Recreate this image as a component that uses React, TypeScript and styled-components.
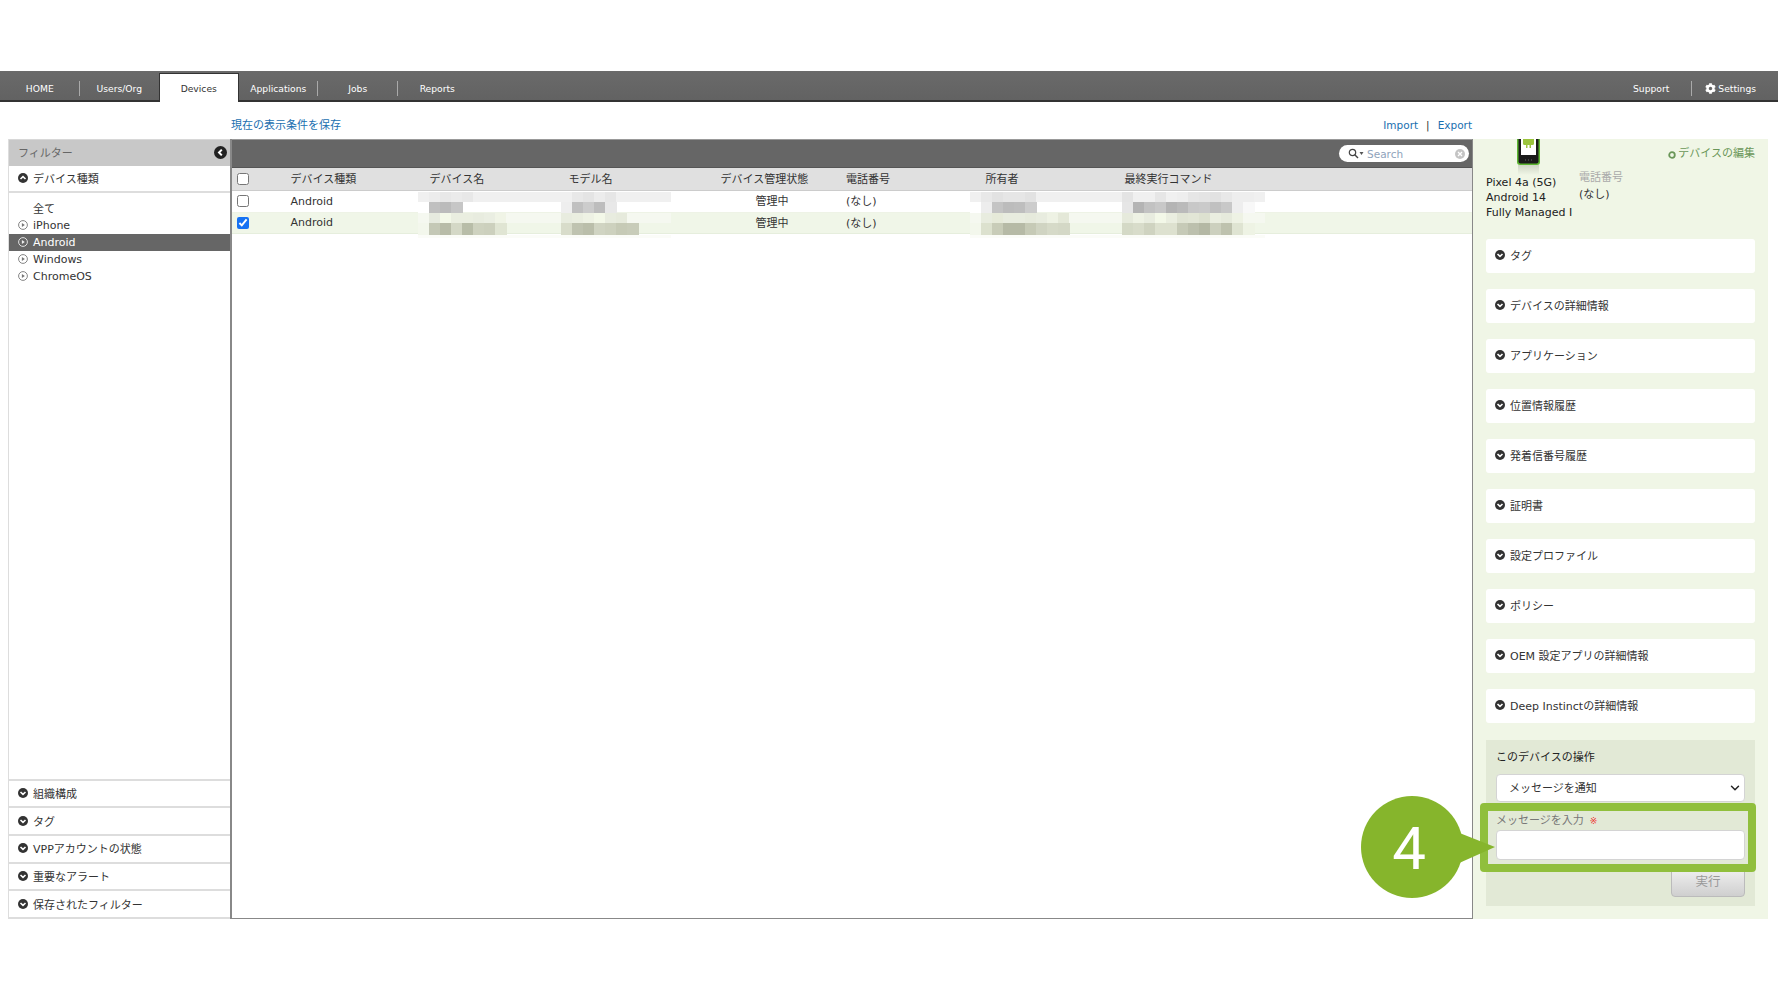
import React from "react";
import styled, { createGlobalStyle } from "styled-components";
import { FaCog } from "react-icons/fa";
import { ChevronDown } from "lucide-react";

const FONT = `"DejaVu Sans", "Noto Sans CJK JP", sans-serif`;

const Global = createGlobalStyle`
  html, body { margin: 0; padding: 0; background: #fff; }
  body { font-family: ${FONT}; font-size: 11px; color: #333; height: 1000px; overflow: hidden; }
  * { box-sizing: border-box; }
`;

const Page = styled.div`
  padding-top: 71px;
`;

const NavBar = styled.nav`
  display: flex;
  align-items: flex-end;
  justify-content: space-between;
  height: 31px;
  background: linear-gradient(#6a6a6a, #626262);
  border-bottom: 2px solid #333;
`;
const NavGroup = styled.div`
  display: flex;
  align-items: flex-end;
  height: 100%;
`;
const Tab = styled.a<{ $active?: boolean; $sep?: boolean }>`
  position: relative;
  width: 79.5px;
  height: ${(p) => (p.$active ? "29px" : "100%")};
  margin-bottom: ${(p) => (p.$active ? "-2px" : "0")};
  padding-top: ${(p) => (p.$active ? "1px" : "5px")};
  display: flex;
  align-items: center;
  justify-content: center;
  font-size: 9.2px;
  color: ${(p) => (p.$active ? "#333" : "#fff")};
  background: ${(p) => (p.$active ? "#fff" : "transparent")};
  border: ${(p) => (p.$active ? "1px solid #333" : "none")};
  border-bottom: none;
  &::after {
    content: "";
    display: ${(p) => (p.$sep ? "block" : "none")};
    position: absolute;
    right: 0;
    top: 10px;
    height: 15px;
    width: 1px;
    background: #aaa;
  }
`;
const RightNav = styled(NavGroup)`
  align-items: center;
  padding: 5px 22px 0 0;
  color: #fff;
  font-size: 9.2px;
`;
const NavDivider = styled.span`
  width: 1px;
  height: 15px;
  background: #aaa;
  margin: 0 13px 0 22px;
`;
const SettingsLink = styled.a`
  display: flex;
  align-items: center;
  gap: 2px;
`;

const LinkRow = styled.div`
  height: 37px;
  display: flex;
  align-items: center;
  justify-content: space-between;
  padding: 6px 306px 0 231px;
  color: #1a6fb0;
`;
const LinkGroup = styled.div`
  display: flex;
  gap: 8px;
  align-items: center;
  font-size: 10.5px;
  padding-top: 3px;
`;
const LinkBar = styled.span`
  color: #333;
`;

const Main = styled.main`
  display: flex;
  height: 780px;
  margin: 0 10px 0 8px;
`;

const FilterPanel = styled.aside`
  width: 222px;
  display: flex;
  flex-direction: column;
  border-left: 1px solid #ddd;
  height: 780px;
`;
const FilterHead = styled.div`
  height: 27px;
  flex: none;
  background: #c8c8c8;
  border-top: 1px solid #d8d8d8;
  color: #666;
  display: flex;
  align-items: center;
  justify-content: space-between;
  padding: 0 3px 2px 9px;
`;
const SectionRow = styled.div<{ $bottom?: boolean }>`
  flex: none;
  height: ${(p) => (p.$bottom ? "27.7px" : "27px")};
  display: flex;
  align-items: center;
  gap: 5px;
  padding: 0 0 1px 9px;
  border-bottom: 2px solid #ddd;
`;
const TypeList = styled.ul`
  list-style: none;
  margin: 0;
  padding: 7px 0 0;
  flex: 1;
  border-bottom: 2px solid #ddd;
`;
const TypeItem = styled.li<{ $active?: boolean }>`
  height: 17px;
  display: flex;
  align-items: center;
  gap: 5px;
  padding: 0 0 1px 9px;
  background: ${(p) => (p.$active ? "#666" : "transparent")};
  color: ${(p) => (p.$active ? "#fff" : "#333")};
`;
const TypeAll = styled(TypeItem)`
  padding: 0 0 2px 24px;
`;

const TablePanel = styled.section`
  width: 1243px;
  display: flex;
  flex-direction: column;
  border-left: 2px solid #888;
  border-right: 1px solid #888;
  border-bottom: 1px solid #888;
`;
const TableBar = styled.div`
  height: 29px;
  flex: none;
  background: #666;
  border-top: 1px solid #999;
  border-bottom: 1px solid #555;
  display: flex;
  align-items: center;
  justify-content: flex-end;
  padding-right: 3px;
`;
const SearchBox = styled.div`
  width: 130px;
  height: 17px;
  border-radius: 9px;
  background: #fff;
  display: flex;
  align-items: center;
  padding: 0 3px 0 9px;
  gap: 3px;
  color: #8fa3bb;
  font-size: 10.5px;
`;
const SearchText = styled.span`
  flex: 1;
`;

const GRID = "58.5px 139px 139px 139px 138.5px 139.5px 139px 1fr";
const HeadRow = styled.div`
  display: grid;
  grid-template-columns: ${GRID};
  height: 23px;
  padding-bottom: 2px;
  background: #e0e0e0;
  border-bottom: 1px solid #ccc;
  align-items: center;
  flex: none;
`;
const DataRow = styled.div<{ $selected?: boolean }>`
  display: grid;
  grid-template-columns: ${GRID};
  height: 21.5px;
  flex: none;
  align-items: center;
  background: ${(p) => (p.$selected ? "#f0f6e8" : "#fff")};
  border-bottom: 1px solid ${(p) => (p.$selected ? "#e6eedd" : "#eef3e6")};
`;
const CheckCell = styled.div`
  display: flex;
  padding-left: 5px;
`;
const HeadCheckCell = styled(CheckCell)`
  padding-top: 2px;
`;
const Check = styled.input`
  width: 12px;
  height: 12px;
  margin: 0;
  accent-color: #1672f3;
`;
const Cell = styled.div`
  position: relative;
  white-space: nowrap;
`;
const HeadStatus = styled(Cell)`
  padding-left: 13px;
`;
const JaCell = styled(Cell)`
  padding-bottom: 2px;
`;
const StatusCell = styled(JaCell)`
  padding-left: 48px;
`;
const MosaicSvg = styled.svg<{ $left: number; $top: number }>`
  position: absolute;
  left: ${(p) => p.$left}px;
  top: ${(p) => p.$top}px;
  display: block;
`;

const SidePanel = styled.aside`
  width: 295px;
  background: #f0f6e6;
  padding: 0 13px 0 13px;
  display: flex;
  flex-direction: column;
`;
const Summary = styled.div`
  height: 100px;
  flex: none;
  display: flex;
`;
const InfoCol = styled.div`
  width: 93px;
  line-height: 15px;
  color: #222;
  white-space: nowrap;
`;
const PhoneWrap = styled.div`
  display: flex;
  padding-left: 31px;
  height: 36px;
`;
const PhoneCol = styled.div`
  padding-top: 30px;
  line-height: 17px;
`;
const PhoneLabel = styled.div`
  color: #aaa;
`;
const EditLink = styled.a`
  margin-left: auto;
  padding-top: 8px;
  color: #6a9658;
  display: flex;
  align-items: flex-start;
  gap: 2px;
  line-height: 14px;
`;
const Card = styled.div`
  height: 34px;
  flex: none;
  background: #fff;
  border-radius: 3px;
  margin-bottom: 16px;
  display: flex;
  align-items: center;
  gap: 5px;
  padding: 0 0 2px 9px;
`;
const OpsPanel = styled.div`
  position: relative;
  margin-top: 1px;
  height: 166px;
  background: #e2e9d6;
  padding: 12px 10px 0;
`;
const OpsTitle = styled.div`
  line-height: 12px;
  color: #222;
`;
const SelectWrap = styled.div`
  position: relative;
  margin-top: 10px;
  height: 28px;
  color: #333;
`;
const Select = styled.select`
  appearance: none;
  width: 100%;
  height: 28px;
  background: #fff;
  border: 1px solid #d4d4d4;
  border-radius: 4px;
  padding-left: 12px;
  font: 11px ${FONT};
  color: #333;
`;
const SelectArrow = styled.span`
  position: absolute;
  right: 3px;
  top: 7px;
  display: flex;
  pointer-events: none;
`;
const FieldLabel = styled.label`
  display: block;
  margin-top: 13px;
  line-height: 12px;
  color: #777;
`;
const Required = styled.span`
  color: #e33;
  margin-left: 6px;
  font-size: 9px;
`;
const TextInput = styled.input`
  display: block;
  width: 100%;
  height: 30px;
  margin-top: 3px;
  background: #fff;
  border: 1px solid #d4d4d4;
  border-radius: 4px;
`;
const RunRow = styled.div`
  display: flex;
  justify-content: flex-end;
  margin-top: 8px;
`;
const RunButton = styled.button`
  width: 74px;
  height: 29px;
  padding: 0 0 4px;
  background: linear-gradient(#f0f0f0, #cfcfcf);
  border: 1px solid #bbb;
  border-radius: 4px;
  color: #999;
  font: 12.5px ${FONT};
`;
const Highlight = styled.div`
  position: absolute;
  left: -6px;
  top: 63px;
  width: 276px;
  height: 69px;
  border: 8px solid #90bf3c;
  border-radius: 4px;
  pointer-events: none;
`;
const Bubble = styled.svg`
  position: absolute;
  left: -125px;
  top: 56px;
`;
const BubbleNumber = styled.text`
  font-family: Roboto, "Liberation Sans", sans-serif;
  font-size: 60px;
  fill: #fff;
`;

const CircleChevron = ({ up }: { up?: boolean }) => (
  <svg width="10" height="10" viewBox="0 0 10 10" style={{ flex: "none" }}>
    <circle cx="5" cy="5" r="5" fill="#333" />
    <path
      d={up ? "M2.5 6 L5 3.6 L7.5 6" : "M2.5 4 L5 6.4 L7.5 4"}
      fill="none"
      stroke="#fff"
      strokeWidth="1.6"
    />
  </svg>
);
const CirclePlay = ({ light }: { light?: boolean }) => (
  <svg width="10" height="10" viewBox="0 0 10 10" style={{ flex: "none" }}>
    <circle cx="5" cy="5" r="4.4" fill="none" stroke={light ? "#eee" : "#777"} strokeWidth="0.9" />
    <path d="M3.9 3.1 L6.8 5 L3.9 6.9 Z" fill={light ? "#eee" : "#777"} />
  </svg>
);
const BackIcon = () => (
  <svg width="13" height="13" viewBox="0 0 13 13">
    <circle cx="6.5" cy="6.5" r="6.5" fill="#222" />
    <path d="M7.8 3.6 L5 6.5 L7.8 9.4" fill="none" stroke="#fff" strokeWidth="2" />
  </svg>
);
const SearchGlyph = () => (
  <svg width="16" height="11" viewBox="0 0 16 11" style={{ flex: "none" }}>
    <circle cx="4.5" cy="4.5" r="3.2" fill="none" stroke="#444" strokeWidth="1.2" />
    <path d="M7 7 L10 10" stroke="#444" strokeWidth="1.4" />
    <path d="M11.5 4 L15.5 4 L13.5 7 Z" fill="#555" />
  </svg>
);
const ClearGlyph = () => (
  <svg width="10" height="10" viewBox="0 0 10 10" style={{ flex: "none", marginRight: 1 }}>
    <circle cx="5" cy="5" r="5" fill="#c4c4c4" />
    <path d="M3 3 L7 7 M7 3 L3 7" stroke="#fff" strokeWidth="1.3" />
  </svg>
);
const RingIcon = () => (
  <svg width="8" height="8" viewBox="0 0 8 8" style={{ flex: "none", marginTop: 4 }}>
    <circle cx="4" cy="4" r="2.8" fill="none" stroke="#6a9658" strokeWidth="1.8" />
  </svg>
);
const PhoneIcon = () => (
  <svg width="23" height="36" viewBox="0 0 23 36">
    <defs>
      <linearGradient id="phoneShadow" x1="0" y1="0" x2="0" y2="1">
        <stop offset="0" stopColor="#cfd6c6" />
        <stop offset="1" stopColor="#f0f6e6" />
      </linearGradient>
    </defs>
    <rect x="1" y="26" width="21" height="10" fill="url(#phoneShadow)" />
    <rect x="0" y="-8" width="23" height="34" rx="3" fill="#5cb531" />
    <rect x="1.5" y="-8" width="20" height="32.5" rx="2" fill="#1a1a1a" />
    <rect x="4" y="-8" width="15" height="24" fill="#fff" />
    <path d="M6 -2 H17 V4.5 a1.5 1.5 0 0 1 -1.5 1.5 H14 V9 H12.5 V6 H10.5 V9 H9 V6 H7.5 A1.5 1.5 0 0 1 6 4.5 Z" fill="#9bc43d" />
    <path d="M8 21 h1 M11 21 h1 M14 21 h1" stroke="#666" strokeWidth="1" />
  </svg>
);

type Band = { h: number; c: string[] };
const Mosaic = ({ left, top, w, bands }: { left: number; top: number; w: number; bands: Band[] }) => {
  const width = Math.max(...bands.map((b) => b.c.length)) * w;
  const height = bands.reduce((s, b) => s + b.h, 0);
  let y = 0;
  return (
    <MosaicSvg $left={left} $top={top} width={width} height={height} shapeRendering="crispEdges" aria-hidden>
      {bands.map((b, i) => {
        const rects = b.c.map((c, j) => <rect key={j} x={j * w} y={y} width={w + 0.5} height={b.h} fill={c} />);
        y += b.h;
        return <g key={i}>{rects}</g>;
      })}
    </MosaicSvg>
  );
};

const rep = (c: string, n: number) => Array(n).fill(c);
const P1 = "#f0f0f0";
const P2 = "#f5f8f0";

const NAME_1: Band[] = [
  { h: 10, c: [P1, "#ececec", "#e8e8e8", "#ebebeb", "#e8e8e8", ...rep(P1, 8)] },
  { h: 12, c: ["#fff", "#c0c0c0", "#bbb", "#c6c6c6"] },
];
const MODEL_1: Band[] = [
  { h: 10, c: [P1, "#e8e8e8", "#e4e4e4", "#ececec", "#e6e6e6", P1, ...rep(P1, 4)] },
  { h: 12, c: ["#eee", "#c0c0c0", "#ccc", "#bdbdbd", "#e8e8e8"] },
];
const OWNER_1: Band[] = [
  { h: 10, c: ["#f0f0f0", "#e8e8e8", "#e2e2e2", "#e6e6e6", "#e6e6e6", "#e2e2e2", ...rep(P1, 8)] },
  { h: 12, c: ["#fff", "#ededed", "#c4c4c4", "#bcbcbc", "#bebebe", "#ccc"] },
];
const CMD_1: Band[] = [
  { h: 10, c: ["#e4e4e4", "#f0f0f0", "#f0f0f0", "#e6e6e6", "#f0f0f0", "#eee", "#e6e6e6", "#e4e4e4", "#e2e2e2", "#e8e8e8", "#eee", "#eee", P1] },
  { h: 12, c: ["#e6e6e6", "#b4b4b4", "#c2c2c2", "#c8c8c8", "#b4b4b4", "#bababa", "#c8c8c8", "#cacaca", "#c0c0c0", "#c8c8c8", "#eee", "#f8f8f8"] },
];
const NAME_2: Band[] = [
  { h: 10, c: [P2, "#e6eadf", "#f3f8e8", "#eaeee0", "#eaeee0", "#e8ecdf", "#eaeee2", "#f0f4e6", ...rep(P2, 5)] },
  { h: 12, c: ["#f3f7ec", "#c4c8b6", "#b8bca8", "#d4d8c6", "#b8bda8", "#ced2bf", "#ccd0bd", "#e0e5d3"] },
  { h: 3, c: rep("#fbfcf8", 13) },
];
const MODEL_2: Band[] = [
  { h: 10, c: ["#e8ecdf", "#eaeee0", "#eef2e4", "#f3f8e8", "#e8ecdf", "#e6eadc", P2, P2, P2, P2] },
  { h: 12, c: ["#d8dcca", "#bfc3b0", "#babeaa", "#d0d4c2", "#cdd1be", "#c6cab6", "#c8ccb9"] },
  { h: 3, c: rep("#fbfcf8", 10) },
];
const OWNER_2: Band[] = [
  { h: 10, c: [P2, "#e8ecdf", "#e6ead9", "#e8ecdf", "#e8ecdf", "#e6eadc", "#e8ecdf", "#eef2e4", "#e4e8d8", ...rep(P2, 5)] },
  { h: 12, c: ["#f3f7ec", "#dce1ce", "#c8ccb8", "#b6baa6", "#b6baa6", "#c6cab6", "#d0d4c2", "#d6dac8", "#d4d8c6"] },
  { h: 3, c: rep("#fbfcf8", 14) },
];
const CMD_2: Band[] = [
  { h: 10, c: ["#e6eadc", "#eef2e4", "#e8ecdf", "#f3f8e8", "#eaeee0", "#e0e4d4", "#e2e6d6", "#dde1d0", "#eaeee0", "#e6eadc", "#eef2e4", P2, P2] },
  { h: 12, c: ["#d4d9c6", "#d8dcca", "#cfd3c0", "#dde1cf", "#dde1cf", "#c6cab7", "#bcc0ad", "#b4b8a4", "#ccd0be", "#bec2ae", "#dfe4d2", "#eef3e4"] },
  { h: 3, c: rep("#fbfcf8", 13) },
];

const FILTER_SECTIONS = ["組織構成", "タグ", "VPPアカウントの状態", "重要なアラート", "保存されたフィルター"];
const CARDS = [
  "タグ",
  "デバイスの詳細情報",
  "アプリケーション",
  "位置情報履歴",
  "発着信番号履歴",
  "証明書",
  "設定プロファイル",
  "ポリシー",
  "OEM 設定アプリの詳細情報",
  "Deep Instinctの詳細情報",
];

export default function App() {
  return (
    <Page>
      <Global />
      <NavBar>
        <NavGroup>
          <Tab $sep>HOME</Tab>
          <Tab>Users/Org</Tab>
          <Tab $active>Devices</Tab>
          <Tab $sep>Applications</Tab>
          <Tab $sep>Jobs</Tab>
          <Tab>Reports</Tab>
        </NavGroup>
        <RightNav>
          <span>Support</span>
          <NavDivider />
          <SettingsLink>
            <FaCog size={11} />
            <span>Settings</span>
          </SettingsLink>
        </RightNav>
      </NavBar>
      <LinkRow>
        <a>現在の表示条件を保存</a>
        <LinkGroup>
          <a>Import</a>
          <LinkBar>|</LinkBar>
          <a>Export</a>
        </LinkGroup>
      </LinkRow>
      <Main>
        <FilterPanel>
          <FilterHead>
            <span>フィルター</span>
            <BackIcon />
          </FilterHead>
          <SectionRow>
            <CircleChevron up />
            <span>デバイス種類</span>
          </SectionRow>
          <TypeList>
            <TypeAll>全て</TypeAll>
            <TypeItem><CirclePlay /><span>iPhone</span></TypeItem>
            <TypeItem $active><CirclePlay light /><span>Android</span></TypeItem>
            <TypeItem><CirclePlay /><span>Windows</span></TypeItem>
            <TypeItem><CirclePlay /><span>ChromeOS</span></TypeItem>
          </TypeList>
          {FILTER_SECTIONS.map((s) => (
            <SectionRow $bottom key={s}>
              <CircleChevron />
              <span>{s}</span>
            </SectionRow>
          ))}
        </FilterPanel>
        <TablePanel>
          <TableBar>
            <SearchBox>
              <SearchGlyph />
              <SearchText>Search</SearchText>
              <ClearGlyph />
            </SearchBox>
          </TableBar>
          <HeadRow>
            <HeadCheckCell><Check type="checkbox" readOnly /></HeadCheckCell>
            <Cell>デバイス種類</Cell>
            <Cell>デバイス名</Cell>
            <Cell>モデル名</Cell>
            <HeadStatus>デバイス管理状態</HeadStatus>
            <Cell>電話番号</Cell>
            <Cell>所有者</Cell>
            <Cell>最終実行コマンド</Cell>
          </HeadRow>
          <DataRow>
            <CheckCell><Check type="checkbox" readOnly /></CheckCell>
            <Cell>Android</Cell>
            <Cell><Mosaic left={-12} top={-9} w={11} bands={NAME_1} /></Cell>
            <Cell><Mosaic left={-8} top={-9} w={11} bands={MODEL_1} /></Cell>
            <StatusCell>管理中</StatusCell>
            <JaCell>(なし)</JaCell>
            <Cell><Mosaic left={-16} top={-9} w={11} bands={OWNER_1} /></Cell>
            <Cell><Mosaic left={-3} top={-9} w={11} bands={CMD_1} /></Cell>
          </DataRow>
          <DataRow $selected>
            <CheckCell><Check type="checkbox" defaultChecked /></CheckCell>
            <Cell>Android</Cell>
            <Cell><Mosaic left={-12} top={-10} w={11} bands={NAME_2} /></Cell>
            <Cell><Mosaic left={-8} top={-10} w={11} bands={MODEL_2} /></Cell>
            <StatusCell>管理中</StatusCell>
            <JaCell>(なし)</JaCell>
            <Cell><Mosaic left={-16} top={-10} w={11} bands={OWNER_2} /></Cell>
            <Cell><Mosaic left={-3} top={-10} w={11} bands={CMD_2} /></Cell>
          </DataRow>
        </TablePanel>
        <SidePanel>
          <Summary>
            <InfoCol>
              <PhoneWrap><PhoneIcon /></PhoneWrap>
              <div>Pixel 4a (5G)</div>
              <div>Android 14</div>
              <div>Fully Managed I</div>
            </InfoCol>
            <PhoneCol>
              <PhoneLabel>電話番号</PhoneLabel>
              <div>(なし)</div>
            </PhoneCol>
            <EditLink>
              <RingIcon />
              <span>デバイスの編集</span>
            </EditLink>
          </Summary>
          {CARDS.map((c) => (
            <Card key={c}>
              <CircleChevron />
              <span>{c}</span>
            </Card>
          ))}
          <OpsPanel>
            <OpsTitle>このデバイスの操作</OpsTitle>
            <SelectWrap>
              <Select defaultValue="notify">
                <option value="notify">メッセージを通知</option>
              </Select>
              <SelectArrow><ChevronDown size={14} strokeWidth={2.5} color="#222" /></SelectArrow>
            </SelectWrap>
            <FieldLabel>
              メッセージを入力<Required>※</Required>
            </FieldLabel>
            <TextInput />
            <RunRow><RunButton>実行</RunButton></RunRow>
            <Highlight />
            <Bubble width="136" height="102" viewBox="0 0 136 102">
              <circle cx="51" cy="51" r="51" fill="#86b52c" />
              <path d="M96 36 L134 51 L96 68 Z" fill="#86b52c" />
              <BubbleNumber x="48" y="73" textAnchor="middle">4</BubbleNumber>
            </Bubble>
          </OpsPanel>
        </SidePanel>
      </Main>
    </Page>
  );
}
